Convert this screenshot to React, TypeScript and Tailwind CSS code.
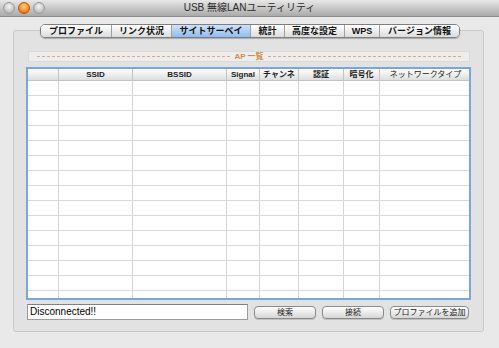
import React from 'react';

const jp = { fontFamily: '"Lucida Grande", "Liberation Sans", "Noto Sans CJK JP", sans-serif' };

const tabs = ['プロファイル', 'リンク状況', 'サイトサーベイ', '統計', '高度な設定', 'WPS', 'バージョン情報'];
const tabWidths = [70, 60, 79, 34, 60, 35, 80];

const columns = [
  { label: '', w: 31 },
  { label: 'SSID', w: 74 },
  { label: 'BSSID', w: 94 },
  { label: 'Signal', w: 33 },
  { label: 'チャンネ', w: 39 },
  { label: '認証', w: 45 },
  { label: '暗号化', w: 36 },
  { label: 'ネットワークタイプ', w: 91, light: true },
];

const TrafficLight: React.FC<{ active?: boolean }> = ({ active }) => (
  <div
    className={`shrink-0 w-[12px] h-[12px] rounded-full border ${
      active
        ? 'border-[#b8561c] bg-[radial-gradient(circle_at_50%_35%,#ffd27a,#f08a24_60%,#c95a14)]'
        : 'border-[#9a9a9a] bg-[radial-gradient(circle_at_50%_35%,#f4f4f4,#c6c6c6_60%,#a8a8a8)]'
    }`}
  />
);

const App: React.FC = () => {
  return (
    <div className="w-[499px] h-[348px] bg-[#e9e9e9] overflow-hidden flex flex-col" style={jp}>
      {/* title bar */}
      <div className="relative h-[17px] shrink-0 bg-gradient-to-b from-[#e8e8e8] to-[#aaaaaa] border-b border-[#8c8c8c] flex items-center">
        <div className="flex items-center gap-[3px] pl-[3px]">
          <TrafficLight />
          <TrafficLight active />
          <TrafficLight />
        </div>
        <div className="absolute inset-0 flex items-center justify-center text-[10px] text-[#2a2a2a] leading-none">
          USB 無線LANユーティリティ
        </div>
      </div>

      {/* tabs */}
      <div className="relative z-10 mt-[7px] flex justify-center pl-[1px]">
        <div className="flex h-[14px] border border-[#7f7f7f] rounded-[5px] overflow-hidden shadow-[0_1px_1px_rgba(0,0,0,0.25)]">
          {tabs.map((t, i) => (
            <div
              key={t}
              style={{ width: tabWidths[i] }}
              className={`flex items-center justify-center text-[9px] font-bold leading-none text-[#111] whitespace-nowrap ${
                i > 0 ? 'border-l border-[#a0a0a0]' : ''
              } ${
                i === 2
                  ? 'bg-gradient-to-b from-[#cfe2fa] to-[#8fbcee]'
                  : 'bg-gradient-to-b from-[#ffffff] to-[#dcdcdc]'
              }`}
            >
              {t}
            </div>
          ))}
        </div>
      </div>

      {/* group box */}
      <div className="-mt-[8px] ml-[13px] w-[471px] h-[302px] border border-[#c9c9c9] rounded-[3px] bg-[#e2e2e2] flex flex-col">
        {/* separator */}
        <div className="mt-[20px] ml-[14px] w-[442px] h-[11px] bg-[#ededed] border border-[#dadada] flex items-center px-[8px] gap-[4px]">
          <div className="flex-1 border-t border-dashed border-[#e0a878]" />
          <span className="text-[8px] font-bold text-[#d08c4c] leading-none">AP 一覧</span>
          <div className="flex-1 border-t border-dashed border-[#e0a878]" />
        </div>

        {/* table */}
        <div className="mt-[5px] ml-[12px] w-[445px] h-[233px] border-2 border-[#79a6dc] bg-white overflow-hidden">
          <div className="flex h-[12px] bg-gradient-to-b from-[#ffffff] to-[#dedede] border-b border-[#c4c4c4]">
            {columns.map((c, i) => (
              <div
                key={i}
                style={{ width: c.w }}
                className={`shrink-0 flex items-center justify-center text-[8px] leading-none text-[#222] whitespace-nowrap overflow-hidden ${
                  c.light ? 'font-normal' : 'font-bold'
                } ${i < columns.length - 1 ? 'border-r border-[#c4c4c4]' : ''}`}
              >
                {c.label}
              </div>
            ))}
          </div>
          {Array.from({ length: 15 }).map((_, r) => (
            <div key={r} className="flex h-[15px] border-b border-[#d9d9d9]">
              {columns.map((c, i) => (
                <div
                  key={i}
                  style={{ width: c.w }}
                  className={`shrink-0 ${i < columns.length - 1 ? 'border-r border-[#d4d4d4]' : ''}`}
                />
              ))}
            </div>
          ))}
        </div>

        {/* bottom row */}
        <div className="mt-[4px] ml-[13px] flex items-end">
          <div className="w-[221px] h-[16px] bg-white border border-[#9c9c9c] border-t-[#808080] flex items-center pl-[2px]">
            <span className="text-[10px] text-black leading-none" style={{ fontFamily: '"Liberation Sans", sans-serif' }}>
              Disconnected!!
            </span>
          </div>
          <div className="flex gap-[6px] ml-[6px] mb-[1px]">
            {[
              { t: '検索', w: 62 },
              { t: '接続', w: 62 },
              { t: 'プロファイルを追加', w: 79 },
            ].map((b) => (
              <div
                key={b.t}
                style={{ width: b.w }}
                className="h-[13px] rounded-[4px] border border-[#8a8a8a] bg-gradient-to-b from-[#ffffff] to-[#d6d6d6] shadow-[0_1px_0_rgba(0,0,0,0.15)] flex items-center justify-center text-[8px] leading-none text-[#222] whitespace-nowrap"
              >
                {b.t}
              </div>
            ))}
          </div>
        </div>
      </div>
    </div>
  );
};

export default App;
